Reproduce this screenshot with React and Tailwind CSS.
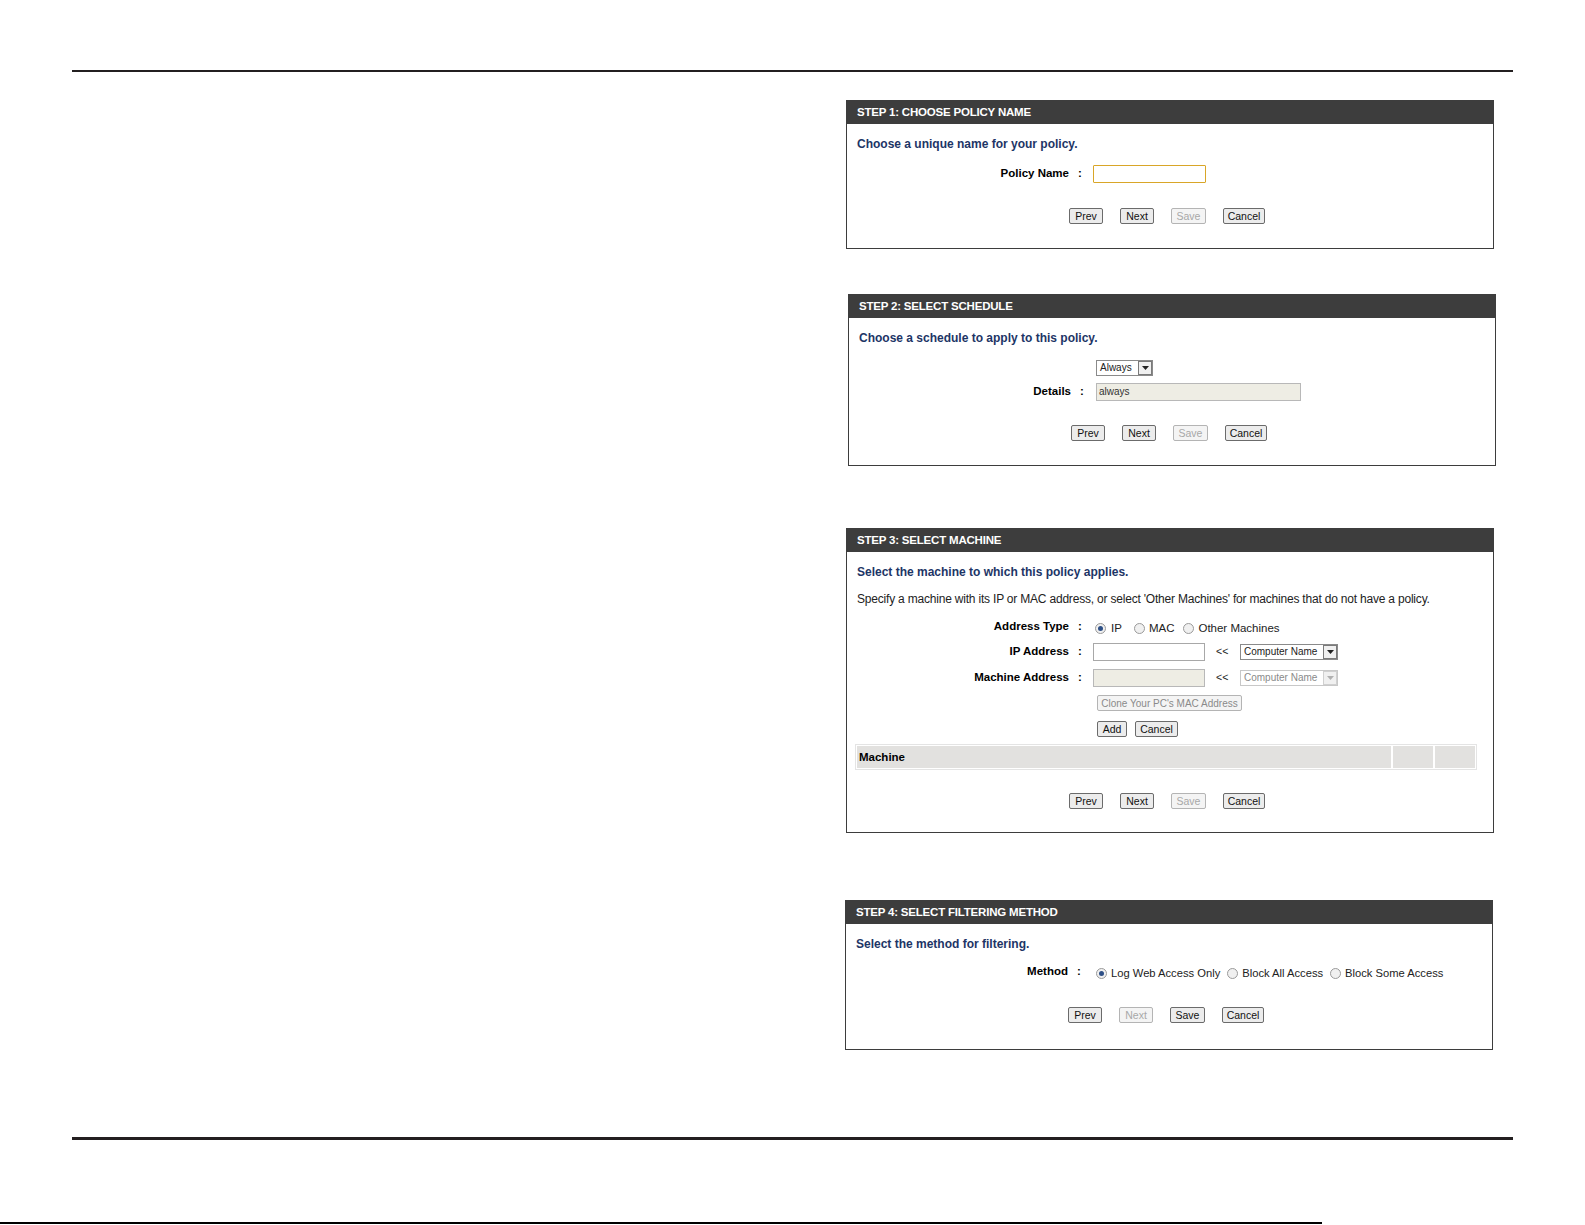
import React from "react";

const FONT = { fontFamily: '"Liberation Sans", Arial, sans-serif' };

function Btn({ children, disabled, w }) {
  return (
    <div
      className={`h-[16px] ${w} flex items-center justify-center text-[10.5px] leading-none rounded-[2px] border ${
        disabled
          ? "border-[#b4b4b4] text-[#a8a8a8] bg-[#f4f4f4]"
          : "border-[#6b6b6b] text-[#111] bg-[#ececec]"
      }`}
    >
      {children}
    </div>
  );
}

function Buttons({ nextDisabled, saveDisabled = true, mt, ml = "ml-[222px]" }) {
  return (
    <div className={`flex ${ml} ${mt} gap-[17px]`}>
      <Btn w="w-[34px]">Prev</Btn>
      <Btn w="w-[34px]" disabled={nextDisabled}>Next</Btn>
      <Btn w="w-[35px]" disabled={saveDisabled}>Save</Btn>
      <Btn w="w-[42px]">Cancel</Btn>
    </div>
  );
}

function Header({ children }) {
  return (
    <div className="h-[24px] bg-[#3d3d3d] text-white font-bold text-[11.5px] leading-[24px] pl-[10px] tracking-[-0.2px]">
      {children}
    </div>
  );
}

function Label({ children, w = "w-[236px]" }) {
  return (
    <div className={`${w} shrink-0 flex justify-end items-center font-bold text-[11.5px] text-black`}>
      <span>{children}</span>
      <span className="ml-[8px] w-[6px] text-center">:</span>
    </div>
  );
}

function Radio({ checked }) {
  return (
    <div className="w-[11px] h-[11px] rounded-full border border-[#9a9a9a] bg-[#f0f0f0] flex items-center justify-center shrink-0">
      {checked && <div className="w-[5px] h-[5px] rounded-full bg-[#2d4f86]" />}
    </div>
  );
}

function Select({ label, w, disabled }) {
  return (
    <div className={`h-[16px] ${w} flex border ${disabled ? "border-[#c8c8c8]" : "border-[#8a8a8a]"} bg-white`}>
      <div className={`flex-1 text-[10px] leading-[14px] pl-[3px] ${disabled ? "text-[#8a8a8a]" : "text-[#222]"}`}>{label}</div>
      <div className={`w-[14px] h-[14px] border ${disabled ? "border-[#d0d0d0]" : "border-[#7a7a7a]"} bg-[#f0f0f0] flex items-center justify-center`}>
        <svg width="7" height="4" viewBox="0 0 7 4">
          <path d="M0 0 H7 L3.5 4 Z" fill={disabled ? "#b0b0b0" : "#222"} />
        </svg>
      </div>
    </div>
  );
}

export default function App() {
  return (
    <div className="w-[1585px] h-[1225px] bg-white relative overflow-hidden" style={FONT}>
      <div className="pt-[70px]">
        <div className="mx-[72px] h-[2px] bg-[#231f20]" />
      </div>

      {/* Panel 1 */}
      <div className="ml-[846px] mt-[28px] w-[648px] h-[149px] border border-[#3d3d3d] border-t-0">
        <Header>STEP 1: CHOOSE POLICY NAME</Header>
        <div className="mt-[12px] pl-[10px] h-[16px] leading-[16px] text-[12px] font-bold text-[#1d3566]">
          Choose a unique name for your policy.
        </div>
        <div className="mt-[13px] flex items-center h-[18px]">
          <Label>Policy Name</Label>
          <div className="ml-[10px] w-[113px] h-[18px] border border-[#d9a628] rounded-[1px] bg-white" />
        </div>
        <Buttons mt="mt-[25px]" />
      </div>

      {/* Panel 2 */}
      <div className="ml-[848px] mt-[45px] w-[648px] h-[172px] border border-[#3d3d3d] border-t-0">
        <Header>STEP 2: SELECT SCHEDULE</Header>
        <div className="mt-[12px] pl-[10px] h-[16px] leading-[16px] text-[12px] font-bold text-[#1d3566]">
          Choose a schedule to apply to this policy.
        </div>
        <div className="mt-[14px] ml-[247px]">
          <Select label="Always" w="w-[57px]" />
        </div>
        <div className="mt-[7px] flex items-center h-[18px]">
          <Label>Details</Label>
          <div className="ml-[11px] w-[205px] h-[18px] border border-[#b8b8b8] bg-[#eeede4] text-[10px] leading-[16px] pl-[2px] text-[#333]">
            always
          </div>
        </div>
        <Buttons mt="mt-[24px]" />
      </div>

      {/* Panel 3 */}
      <div className="ml-[846px] mt-[62px] w-[648px] h-[305px] border border-[#3d3d3d] border-t-0">
        <Header>STEP 3: SELECT MACHINE</Header>
        <div className="mt-[12px] pl-[10px] h-[16px] leading-[16px] text-[12px] font-bold text-[#1d3566]">
          Select the machine to which this policy applies.
        </div>
        <div className="mt-[11px] pl-[10px] h-[16px] leading-[16px] text-[12px] text-[#222] tracking-[-0.2px]">
          Specify a machine with its IP or MAC address, or select 'Other Machines' for machines that do not have a policy.
        </div>
        <div className="mt-[12px] flex items-center h-[16px]">
          <Label>Address Type</Label>
          <div className="ml-[12px] flex items-center text-[11.5px] text-[#222] mt-[3px]">
            <Radio checked />
            <span className="ml-[5px]">IP</span>
            <div className="ml-[12px]"><Radio /></div>
            <span className="ml-[4px]">MAC</span>
            <div className="ml-[9px]"><Radio /></div>
            <span className="ml-[4px]">Other Machines</span>
          </div>
        </div>
        <div className="mt-[8px] flex items-center h-[18px]">
          <Label>IP Address</Label>
          <div className="ml-[10px] w-[112px] h-[18px] border border-[#a8a8a8] bg-white" />
          <span className="ml-[11px] text-[10.5px] text-[#222] w-[24px]">&lt;&lt;</span>
          <Select label="Computer Name" w="w-[98px]" />
        </div>
        <div className="mt-[8px] flex items-center h-[18px]">
          <Label>Machine Address</Label>
          <div className="ml-[10px] w-[112px] h-[18px] border border-[#b8b8b8] bg-[#eeede4]" />
          <span className="ml-[11px] text-[10.5px] text-[#222] w-[24px]">&lt;&lt;</span>
          <Select label="Computer Name" w="w-[98px]" disabled />
        </div>
        <div className="mt-[8px] ml-[250px] flex">
          <div className="h-[16px] w-[145px] flex items-center justify-center text-[10px] rounded-[2px] border border-[#b4b4b4] text-[#8a8a8a] bg-[#f4f4f4]">
            Clone Your PC's MAC Address
          </div>
        </div>
        <div className="mt-[10px] ml-[250px] flex gap-[8px]">
          <Btn w="w-[30px]">Add</Btn>
          <Btn w="w-[43px]">Cancel</Btn>
        </div>
        <div className="mt-[7px] ml-[8px] w-[622px] h-[26px] border border-[#e4e4e4] p-[1px] flex gap-[2px]">
          <div className="flex-1 bg-[#e2e1df] text-[11.5px] font-bold text-black leading-[22px] pl-[2px]">Machine</div>
          <div className="w-[40px] bg-[#e2e1df]" />
          <div className="w-[40px] bg-[#e2e1df]" />
        </div>
        <Buttons mt="mt-[23px]" />
      </div>

      {/* Panel 4 */}
      <div className="ml-[845px] mt-[67px] w-[648px] h-[150px] border border-[#3d3d3d] border-t-0">
        <Header>STEP 4: SELECT FILTERING METHOD</Header>
        <div className="mt-[12px] pl-[10px] h-[16px] leading-[16px] text-[12px] font-bold text-[#1d3566]">
          Select the method for filtering.
        </div>
        <div className="mt-[12px] flex items-center h-[16px]">
          <Label>Method</Label>
          <div className="ml-[14px] flex items-center text-[11.2px] text-[#222] mt-[3px]">
            <Radio checked />
            <span className="ml-[4px]">Log Web Access Only</span>
            <div className="ml-[7px]"><Radio /></div>
            <span className="ml-[4px]">Block All Access</span>
            <div className="ml-[7px]"><Radio /></div>
            <span className="ml-[4px]">Block Some Access</span>
          </div>
        </div>
        <Buttons mt="mt-[27px]" nextDisabled saveDisabled={false} />
      </div>

      <div className="mt-[87px] mx-[72px] h-[3px] bg-[#231f20]" />

      <div className="mt-[82px] w-[1322px] h-[2px] bg-black" />
    </div>
  );
}
